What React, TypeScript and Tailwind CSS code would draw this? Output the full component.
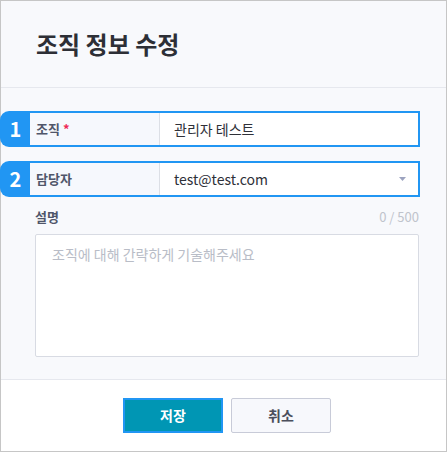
import React from "react";

const font = { fontFamily: "'Noto Sans CJK KR', 'Noto Sans', sans-serif" };

const FieldRow = ({
  num,
  label,
  required,
  children,
}: {
  num: string;
  label: string;
  required?: boolean;
  children: React.ReactNode;
}) => (
  <div className="-ml-px flex h-[36px] w-[420px]">
    <div className="flex w-[30px] items-center justify-center rounded-l-[9px] bg-[#2196f3] pl-[1px] text-[20px] font-bold text-white">
      {num}
    </div>
    <div className="flex flex-1 border-2 border-l-0 border-[#2196f3]">
      <div className="flex w-[130px] items-center border-r border-[#dcdfe6] bg-[#f6f8fd] pl-[6px] text-[13px] font-bold text-[#50566a]">
        {label}
        {required && <span className="ml-[3px] text-[#ee2a55]">*</span>}
      </div>
      <div className="flex flex-1 items-center bg-white pl-[14px] pr-[12px] text-[14px] text-[#2e3038]">
        {children}
      </div>
    </div>
  </div>
);

export default function App() {
  return (
    <div
      className="flex h-[452px] w-[447px] flex-col border border-[#c6c6c6] bg-[#f8f9fc]"
      style={font}
    >
      <div className="flex h-[87px] items-center border-b border-[#e6e8ee] pl-[35px] pb-[1px]">
        <h1 className="text-[24px] font-bold text-[#2d2f36]">조직 정보 수정</h1>
      </div>

      <div className="flex flex-1 flex-col border-b border-[#e6e8ee] pt-[23px]">
        <div className="flex flex-col gap-[14px]">
          <FieldRow num="1" label="조직" required>
            관리자 테스트
          </FieldRow>
          <FieldRow num="2" label="담당자">
            <span className="flex-1">test@test.com</span>
            <svg width="7" height="4" viewBox="0 0 7 4">
              <path d="M0 0h7L3.5 4z" fill="#9ca3bf" />
            </svg>
          </FieldRow>
        </div>

        <div className="mt-[10px] flex flex-col pl-[34px] pr-[27px]">
          <div className="flex h-[20px] items-center justify-between">
            <span className="text-[13px] font-bold text-[#50566a]">설명</span>
            <span className="text-[13px] text-[#c0c4cc]">0 / 500</span>
          </div>
          <textarea
            className="mt-[7px] h-[123px] w-full resize-none rounded-[2px] border border-[#d8dbe3] bg-white px-[16px] py-[9px] text-[14px] text-[#2e3038] outline-none placeholder:text-[#b9bdc7]"
            placeholder="조직에 대해 간략하게 기술해주세요"
          />
        </div>
      </div>

      <div className="flex h-[71px] items-center justify-center gap-[8px] bg-white pl-[7px]">
        <button className="h-[35px] w-[100px] border-2 border-[#2196f3] bg-[#0096b4] text-[14px] font-bold text-white">
          저장
        </button>
        <button className="h-[35px] w-[100px] rounded-[2px] border border-[#c8cbd8] bg-[#f7f8fc] text-[14px] font-bold text-[#4b4f5c]">
          취소
        </button>
      </div>
    </div>
  );
}
